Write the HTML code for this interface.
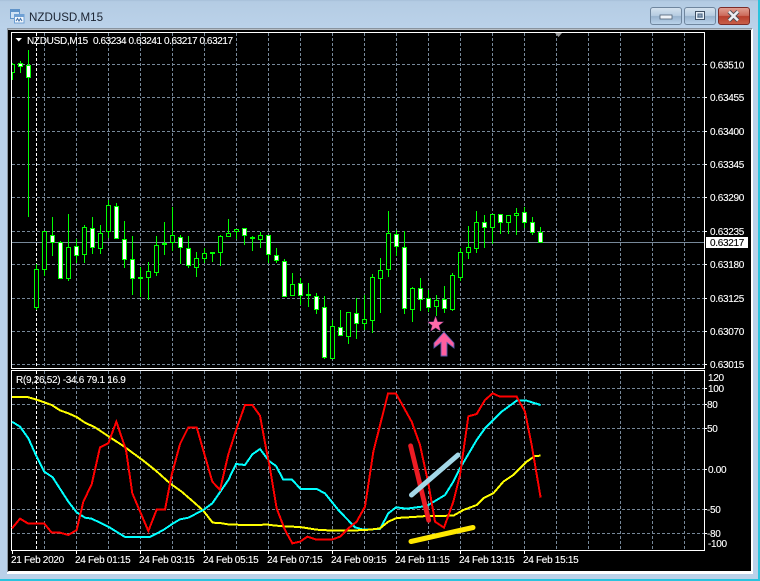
<!DOCTYPE html>
<html><head><meta charset="utf-8"><title>NZDUSD,M15</title>
<style>
html,body{margin:0;padding:0;width:760px;height:581px;overflow:hidden;background:#fff}
svg{display:block;position:absolute;left:0;top:0}
text{font-family:"Liberation Sans",sans-serif;font-size:10px;fill:#fff;letter-spacing:-.3px;stroke:#fff;stroke-width:.12px}
.t{font-family:"Liberation Sans",sans-serif;font-size:11.6px;fill:#1a2230;letter-spacing:0;stroke:none}
</style></head><body>
<svg width="760" height="581" viewBox="0 0 760 581" xmlns="http://www.w3.org/2000/svg">
<defs>
<linearGradient id="tb" x1="0" y1="0" x2="0" y2="1"><stop offset="0" stop-color="#a6bfd8"/><stop offset=".06" stop-color="#b4cce3"/><stop offset="1" stop-color="#bbd2ea"/></linearGradient>
<linearGradient id="bn" x1="0" y1="0" x2="0" y2="1"><stop offset="0" stop-color="#d6e3ef"/><stop offset=".48" stop-color="#b6cce1"/><stop offset=".52" stop-color="#98b3ce"/><stop offset="1" stop-color="#bcd5ec"/></linearGradient>
<linearGradient id="cl" x1="0" y1="0" x2="0" y2="1"><stop offset="0" stop-color="#e2a295"/><stop offset=".48" stop-color="#cc6a5a"/><stop offset=".52" stop-color="#b83e2c"/><stop offset="1" stop-color="#c9604a"/></linearGradient>
</defs>
<path d="M0 581V6Q0 0 6 0H754Q760 0 760 6V581Z" fill="#bad1e9"/>
<rect x="0" y="0" width="760" height="29" fill="url(#tb)"/>
<rect x="758" y="0" width="2" height="581" fill="#2bc3de"/>
<rect x="0" y="579" width="760" height="2" fill="#2bc3de"/>
<rect x="7" y="29" width="746" height="545" fill="#fff"/>
<rect x="7" y="28" width="745" height="1.6" fill="#8a949f"/>
<rect x="7" y="29" width="1.4" height="543" fill="#8a949f"/>
<rect x="8" y="30" width="743" height="541" fill="#000"/>

<!-- title icon -->
<g>
<rect x="10.5" y="9.5" width="9" height="9" fill="#cfe2f5" stroke="#5f93c9"/>
<rect x="11" y="10" width="8" height="2" fill="#5f93c9"/>
<rect x="14.5" y="14.5" width="9.5" height="8.5" fill="#f4f8fd" stroke="#6fa0d4"/>
<rect x="15" y="15" width="9" height="2" fill="#6fa0d4"/>
<path d="M16 21l1.5-2.500 1.500 2.500 1.500-2.500 1.500 2.500" fill="none" stroke="#3f6fa8"/>
</g>
<text class="t" x="29" y="21">NZDUSD,M15</text>

<!-- window buttons -->
<rect x="650.500" y="7.500" width="31" height="17" rx="2.500" fill="url(#bn)" stroke="#6f869e"/>
<rect x="660" y="15" width="12" height="4" fill="#eef3f8" stroke="#4d5f73" stroke-width=".8"/>
<rect x="684.500" y="7.500" width="31" height="17" rx="2.500" fill="url(#bn)" stroke="#6f869e"/>
<rect x="695.500" y="11.500" width="9" height="8" fill="none" stroke="#3e4f63" stroke-width="1"/>
<rect x="696.500" y="12.500" width="7" height="6" fill="none" stroke="#e8f0f7" stroke-width="1"/>
<rect x="698" y="14" width="4" height="3" fill="#8aa4be" stroke="#3e4f63" stroke-width=".6"/>
<rect x="718.500" y="7.500" width="31" height="17" rx="2.500" fill="url(#cl)" stroke="#7c2c28"/>
<path d="M729 11.500l9 9M738 11.500l-9 9" stroke="#4b4f57" stroke-width="4.400" fill="none"/>
<path d="M729 11.500l9 9M738 11.500l-9 9" stroke="#eceff2" stroke-width="2.600" fill="none"/>

<!-- main grid -->
<g stroke="#778899" fill="none" stroke-dasharray="3 2" shape-rendering="crispEdges">
<path d="M12 64.500H704M12 97.500H704M12 131.500H704M12 164.500H704M12 197.500H704M12 231.500H704M12 264.500H704M12 298.500H704M12 331.500H704M12 364.500H704"/>
<path d="M44.500 33V368M76.500 33V368M108.500 33V368M140.500 33V368M172.500 33V368M204.500 33V368M236.500 33V368M268.500 33V368M300.500 33V368M332.500 33V368M364.500 33V368M396.500 33V368M428.500 33V368M460.500 33V368M492.500 33V368M524.500 33V368M556.500 33V368M588.500 33V368M620.500 33V368M652.500 33V368M684.500 33V368"/>
<path d="M12 388.500H704M12 404.500H704M12 428.500H704M12 469.500H704M12 509.500H704M12 533.500H704"/>
<path d="M44.500 371V550M76.500 371V550M108.500 371V550M140.500 371V550M172.500 371V550M204.500 371V550M236.500 371V550M268.500 371V550M300.500 371V550M332.500 371V550M364.500 371V550M396.500 371V550M428.500 371V550M460.500 371V550M492.500 371V550M524.500 371V550M556.500 371V550M588.500 371V550M620.500 371V550M652.500 371V550M684.500 371V550"/>
</g>
<path d="M36.500 33V368M36.500 371V550" stroke="#fff" stroke-dasharray="3 2" fill="none" shape-rendering="crispEdges"/>
<path d="M12 242.500H704" stroke="#778899" fill="none" shape-rendering="crispEdges"/>

<!-- candle wicks -->
<path shape-rendering="crispEdges" fill="none" stroke="#00ff00" d="M12.500 63V80M20.500 61V73M28.500 50V217M36.500 264V310M44.500 231V276M52.500 217V256M60.500 241V278M68.500 214V281M76.500 239V263M84.500 225V263M92.500 217V254M100.500 225V254M108.500 200V238M116.500 203V238M124.500 221V268M132.500 236V295M140.500 267V297M148.500 262V300M156.500 236V276M164.500 222V255M172.500 207V251M180.500 235V264M188.500 236V268M196.500 252V277M204.500 248V263M212.500 253V262M220.500 235V266M228.500 219V237M236.500 229V239M244.500 228V245M252.500 236V251M260.500 232V248M268.500 235V263M276.500 248V263M284.500 259V297M292.500 273V296M300.500 278V305M308.500 283V307M316.500 293V314M324.500 296V359M332.500 320V359M340.500 310V336M348.500 312V344M356.500 298V339M364.500 295V330M372.500 274V333M380.500 258V313M388.500 211V277M396.500 230V256M404.500 231V314M412.500 287V322M420.500 278V311M428.500 290V312M436.500 295V316M444.500 286V313M452.500 273V311M460.500 248V281M468.500 226V259M476.500 211V253M484.500 215V248M492.500 214V244M500.500 214V234M508.500 215V234M516.500 208V235M524.500 207V228M532.500 217V235M540.500 227V242"/>
<!-- doji -->
<path shape-rendering="crispEdges" fill="none" stroke="#00ff00" stroke-width="2" d="M138 278H143M162 244H167M210 253H215M250 238H255M306 295H311"/>
<!-- hollow bodies -->
<path shape-rendering="crispEdges" fill="#000" stroke="#00ff00" d="M11.500 64.500h3v8h-3zM34.500 269.500h4v38h-4zM42.500 231.500h4v38h-4zM66.500 247.500h4v31h-4zM82.500 227.500h4v27h-4zM98.500 233.500h4v15h-4zM106.500 205.500h4v26h-4zM146.500 271.500h4v6h-4zM154.500 245.500h4v27h-4zM170.500 235.500h4v7h-4zM194.500 258.500h4v9h-4zM202.500 253.500h4v5h-4zM218.500 236.500h4v16h-4zM226.500 233.500h4v3h-4zM234.500 229.500h4v2h-4zM258.500 235.500h4v4h-4zM290.500 284.500h4v11h-4zM330.500 326.500h4v32h-4zM346.500 312.500h4v24h-4zM362.500 319.500h4v4h-4zM370.500 277.500h4v43h-4zM378.500 270.500h4v8h-4zM386.500 233.500h4v36h-4zM410.500 288.500h4v21h-4zM434.500 300.500h4v6h-4zM450.500 275.500h4v34h-4zM458.500 252.500h4v25h-4zM466.500 247.500h4v5h-4zM474.500 222.500h4v26h-4zM490.500 214.500h4v13h-4zM506.500 215.500h4v7h-4zM514.500 213.500h4v2h-4z"/>
<!-- filled bodies -->
<path shape-rendering="crispEdges" fill="#fff" stroke="#00ff00" d="M18.500 63.500h4v3h-4zM26.500 65.500h4v12h-4zM50.500 235.500h4v7h-4zM58.500 242.500h4v36h-4zM74.500 246.500h4v9h-4zM90.500 228.500h4v19h-4zM114.500 206.500h4v32h-4zM122.500 239.500h4v20h-4zM130.500 259.500h4v19h-4zM178.500 237.500h4v10h-4zM186.500 248.500h4v17h-4zM242.500 228.500h4v7h-4zM266.500 235.500h4v19h-4zM274.500 255.500h4v5h-4zM282.500 261.500h4v35h-4zM298.500 283.500h4v12h-4zM314.500 296.500h4v13h-4zM322.500 307.500h4v50h-4zM338.500 327.500h4v8h-4zM354.500 313.500h4v10h-4zM394.500 234.500h4v12h-4zM402.500 247.500h4v61h-4zM418.500 288.500h4v11h-4zM426.500 298.500h4v9h-4zM442.500 299.500h4v9h-4zM482.500 222.500h4v5h-4zM498.500 214.500h4v8h-4zM522.500 212.500h4v10h-4zM530.500 222.500h4v10h-4zM538.500 232.500h4v10h-4z"/>

<!-- star + arrow -->
<path d="M435.600 316l2.100 5.700 6 .1-4.700 3.700 1.700 5.800-5.100-3.400-5.100 3.400 1.700-5.800-4.700-3.700 6-.1z" fill="#ff6aa8" stroke="#5a2a6a" stroke-width=".5"/>
<path d="M444 332l10 11v5l-7-5.500v13.500h-6v-13.500l-7 5.500v-5z" fill="#ff5fa0" stroke="#5b5bb0" stroke-width=".9"/>

<!-- frames -->
<path d="M11.500 32.500H704.500V368.500H11.500ZM11.500 370.500H704.500V550.500H11.500Z" fill="none" stroke="#fff" shape-rendering="crispEdges"/>
<path d="M555 33h7l-3.500 4z" fill="#9a9a9a"/>
<path d="M15.500 38h6.500l-3.250 3.500z" fill="#fff"/>

<!-- indicator -->
<g fill="none" stroke-width="6" shape-rendering="crispEdges" transform="translate(0,365) scale(.33333)">
<polyline stroke="#ffff00" points="36,96 82,96 110,104 155,120 180,136 205,145 230,156 255,173 285,187 330,217 370,243 400,265 430,287 470,319 510,355 545,380 575,406 610,437 638,473 660,474 690,479 780,480 800,478 810,480"/>
<polyline stroke="#00ffff" points="36,170 60,185 85,220 110,275 133,320 158,337 205,410 230,442 255,458 275,461 325,485 375,516 450,516 490,495 515,478 540,463 565,458 610,435 637,415 685,345 708,297 735,300 757,268 780,252 805,285 810,290"/>
<polyline stroke="#ff0000" points="36,490 60,461 85,476 133,476 155,503 180,503 205,510 230,495 250,410 275,358 300,247 325,235 349,170 378,255 397,385 445,498 470,434 495,434 515,330 540,237 565,187 590,187 637,350 660,375 685,268 710,190 735,120 757,120 780,152 800,260 810,310"/>
</g>
<g fill="none" stroke-width="6" shape-rendering="crispEdges" transform="translate(270,365) scale(.33333)">
<polyline stroke="#00ffff" points="0,290 18,303 40,344 66,344 92,372 140,372 165,385 205,435 255,487 280,494 330,492 355,445 378,427 410,431 470,423 525,390 550,350 570,310 620,225 645,190 695,140 740,107 770,107 812,120"/>
<polyline stroke="#ffff00" points="0,480 40,484 90,486 140,494 190,497 240,497 300,494 330,490 355,470 380,459 430,456 470,453 550,452 580,435 620,420 640,400 670,385 700,350 730,330 770,290 795,273 812,272"/>
<polyline stroke="#ff0000" points="0,310 20,430 45,495 67,535 90,530 112,515 140,524 185,524 210,515 235,490 260,470 285,425 310,260 354,86 378,86 400,125 425,170 450,240 475,355 495,470 522,488 550,410 570,330 595,154 620,147 645,105 668,85 690,95 740,95 765,140 785,240 812,398"/>
</g>
<!-- hand drawn trendlines -->
<path d="M410.600 445.800L428.700 520.300" stroke="#ed1c24" stroke-width="4.800" stroke-linecap="round" fill="none"/>
<path d="M411.500 495L458 455" stroke="#a4d8e8" stroke-width="5" stroke-linecap="round" fill="none"/>
<path d="M411 541.500L473 527.500" stroke="#ffe800" stroke-width="5" stroke-linecap="round" fill="none"/>

<!-- ticks -->
<path d="M705 64.500h2M705 97.500h2M705 131.500h2M705 164.500h2M705 197.500h2M705 231.500h2M705 264.500h2M705 298.500h2M705 331.500h2M705 364.500h2M705 388.500h2M705 404.500h2M705 428.500h2M705 469.500h2M705 509.500h2M705 533.500h2M12.500 551v3M76.500 551v3M140.500 551v3M204.500 551v3M268.500 551v3M332.500 551v3M396.500 551v3M460.500 551v3M524.500 551v3" stroke="#fff" fill="none" shape-rendering="crispEdges"/>

<!-- labels -->
<text x="27" y="44">NZDUSD,M15</text>
<text x="93" y="44" style="letter-spacing:-.43px">0.63234 0.63241 0.63217 0.63217</text>
<text x="16" y="383">R(9,26,52) -34.6 79.1 16.9</text>
<text x="710" y="68.500">0.63510</text>
<text x="710" y="101">0.63455</text>
<text x="710" y="135">0.63400</text>
<text x="710" y="168">0.63345</text>
<text x="710" y="201">0.63290</text>
<text x="710" y="235">0.63235</text>
<text x="710" y="268">0.63180</text>
<text x="710" y="302">0.63125</text>
<text x="710" y="335">0.63070</text>
<text x="710" y="368">0.63015</text>
<rect x="706" y="237" width="42" height="11" fill="#fff"/>
<text x="710" y="246" style="fill:#000;stroke:#000">0.63217</text>
<text x="708" y="381">120</text>
<text x="708" y="392">100</text>
<text x="707" y="408">80</text>
<text x="707" y="432">50</text>
<text x="708" y="473">0.00</text>
<text x="707" y="513">-50</text>
<text x="707" y="537">-80</text>
<text x="708" y="547">-100</text>
<text x="11" y="563">21 Feb 2020</text>
<text x="75" y="563">24 Feb 01:15</text>
<text x="139" y="563">24 Feb 03:15</text>
<text x="203" y="563">24 Feb 05:15</text>
<text x="267" y="563">24 Feb 07:15</text>
<text x="331" y="563">24 Feb 09:15</text>
<text x="395" y="563">24 Feb 11:15</text>
<text x="459" y="563">24 Feb 13:15</text>
<text x="523" y="563">24 Feb 15:15</text>
</svg>
</body></html>
